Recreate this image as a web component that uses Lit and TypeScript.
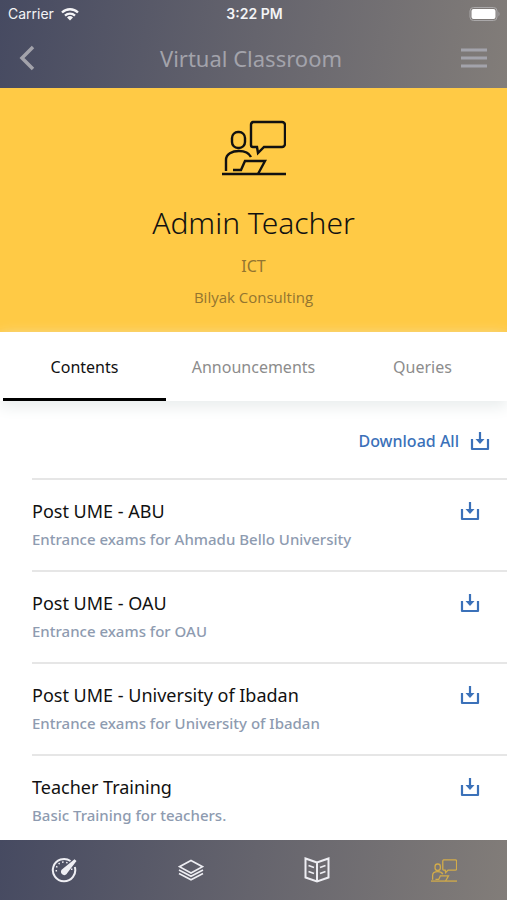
import { LitElement, html, css, svg } from "lit";
import { customElement, property, state } from "lit/decorators.js";
import { classMap } from "lit/directives/class-map.js";

const lecturer = svg`
  <path d="M31 2h29a3 3 0 0 1 3 3v19a3 3 0 0 1-3 3H42l-6 6-1-6h-4a2 2 0 0 1-2-2V5a3 3 0 0 1 2-3z"/>
  <rect x="10" y="12" width="13" height="16" rx="6"/>
  <path d="M4 51V40c0-6 6-9 13-9 5 0 10 2 12 6"/>
  <path d="M11 50h8l4-9h20l-7 13"/>
  <path d="M0 54h64"/>`;

@customElement("lecturer-icon")
class LecturerIcon extends LitElement {
  @property() size = "large";

  static styles = css`
    :host { display: block; }
    svg { display: block; fill: none; stroke: currentColor; }
    .large { width: 64px; height: 56px; stroke-width: 2.4; }
    .small { width: 26px; height: 23px; stroke-width: 3.2; }
  `;

  render() {
    return html`<svg class=${this.size} viewBox="0 0 64 56" aria-hidden="true">${lecturer}</svg>`;
  }
}

@customElement("download-icon")
class DownloadIcon extends LitElement {
  static styles = css`
    :host { display: block; }
    svg { display: block; width: 20px; height: 20px; fill: none; stroke: currentColor; stroke-width: 2.2; stroke-linejoin: round; }
    .head { fill: currentColor; stroke: none; }
  `;

  render() {
    return html`<svg viewBox="0 0 20 20" aria-hidden="true">
      <path d="M2 8v10h16V8M10 1v9" />
      <path class="head" d="M5.500 8h9l-4.500 5z" />
    </svg>`;
  }
}

interface Course {
  title: string;
  about: string;
}

@customElement("app-root")
class AppRoot extends LitElement {
  @state() private tab = "Contents";

  private tabs = ["Contents", "Announcements", "Queries"];

  private courses: Course[] = [
    { title: "Post UME - ABU", about: "Entrance exams for Ahmadu Bello University" },
    { title: "Post UME - OAU", about: "Entrance exams for OAU" },
    { title: "Post UME - University of Ibadan", about: "Entrance exams for University of Ibadan" },
    { title: "Teacher Training", about: "Basic Training for teachers." },
  ];

  static styles = css`
    :host {
      display: flex;
      flex-direction: column;
      height: 100vh;
      background: #fff;
      color: #111;
      font-family: "Noto Sans", "Open Sans", sans-serif;
      --bar: linear-gradient(100deg, #464a61 0%, #65646d 50%, #827d79 100%);
    }
    * { box-sizing: border-box; }
    button {
      border: 0;
      padding: 0;
      margin: 0;
      background: none;
      font: inherit;
      color: inherit;
      cursor: pointer;
    }
    h1, h2, h3, p, ul { margin: 0; padding: 0; font-weight: 400; }
    ul { list-style: none; }
    svg { display: block; }
    .top { flex: none; background: var(--bar); }
    .status {
      display: grid;
      grid-template-columns: 1fr auto 1fr;
      align-items: center;
      height: 28px;
      padding: 0 6px 0 8px;
      color: #f4f4f6;
      font: 14px/20px Inter, sans-serif;
    }
    .carrier { display: flex; align-items: center; gap: 7px; }
    .wifi { width: 18px; height: 13px; fill: none; stroke: currentColor; stroke-width: 2.3; }
    .time { font-weight: 600; }
    .battery { width: 32px; height: 14px; justify-self: end; }
    .title-bar {
      display: flex;
      justify-content: space-between;
      align-items: center;
      height: 60px;
      padding: 0 20px 0 19px;
      color: #a3a3ab;
    }
    .title-bar h1 { font-size: 22px; line-height: 30px; }
    .title-bar svg { fill: none; stroke: currentColor; }
    .back { width: 22px; }
    .back svg { width: 16px; height: 26px; stroke-width: 3.5; }
    .menu svg { width: 26px; height: 22px; stroke-width: 3; }
    .hero {
      flex: none;
      display: flex;
      flex-direction: column;
      align-items: center;
      height: 244px;
      padding-top: 32px;
      background: #ffca45;
      text-align: center;
    }
    .hero h2 { margin-top: 26px; font-size: 30px; line-height: 42px; font-weight: 300; }
    .subject { margin-top: 10px; font-size: 16px; line-height: 24px; color: #937530; }
    .school { margin-top: 8px; font: 15px/22px "Open Sans", sans-serif; color: #937530; }
    .tabs {
      flex: none;
      display: flex;
      height: 69px;
      background: #fff;
      box-shadow: 0 6px 14px #e9eded;
      z-index: 1;
    }
    .tab {
      flex: 1;
      margin: 0 3px;
      padding-top: 4px;
      border-bottom: 3px solid transparent;
      font-size: 16px;
      line-height: 24px;
      color: #8c8c8c;
    }
    .tab.active { border-color: #000; color: #111; }
    main { flex: 1; min-height: 0; overflow-y: auto; scrollbar-width: none; }
    .all { display: flex; justify-content: flex-end; align-items: center; height: 77px; padding: 3px 17px 0 0; }
    .all button { display: flex; align-items: center; gap: 11px; color: #3b71b9; font-size: 16px; line-height: 24px; font-weight: 500; }
    .course {
      display: flex;
      justify-content: space-between;
      align-items: flex-start;
      height: 92px;
      margin-left: 32px;
      padding: 18px 27px 0 0;
      border-top: 2px solid #e6e6e6;
    }
    .course h3 { font-size: 18px; line-height: 26px; }
    .course p { margin-top: 4px; font-size: 15px; line-height: 22px; font-weight: 500; color: #8e9bb0; }
    .get { color: #3b71b9; padding-top: 3px; }
    .nav {
      flex: none;
      display: grid;
      grid-template-columns: repeat(4, 1fr);
      align-items: center;
      height: 60px;
      background: var(--bar);
    }
    .nav a { display: grid; place-items: center; height: 60px; padding-left: 1px; color: #eeeef3; }
    .nav a.here { color: #d3ac49; }
    .nav svg { width: 26px; height: 26px; fill: none; stroke: currentColor; stroke-width: 1.6; }
  `;

  render() {
    return html`
      <header class="top">
        <div class="status">
          <span class="carrier">
            Carrier
            <svg class="wifi" viewBox="0 0 18 13" aria-label="Wi-Fi">
              <path d="M1 4.500a11.500 11.500 0 0 1 16 0M4 7.700a7.300 7.300 0 0 1 10 0" />
              <path fill="currentColor" stroke="none" d="M9 12.500l-3-3a4.300 4.300 0 0 1 6 0z" />
            </svg>
          </span>
          <span class="time">3:22 PM</span>
          <svg class="battery" viewBox="0 0 32 14" aria-label="Battery full">
            <rect x="1" y="0.500" width="27" height="13" rx="3.500" fill="none" stroke="#aaa8a9" />
            <rect x="2.500" y="2" width="24" height="10" rx="2" fill="#fff" />
            <path d="M29.500 4.500q2 2.500 0 5z" fill="#aaa8a9" />
          </svg>
        </div>
        <div class="title-bar">
          <button class="back" aria-label="Back">
            <svg viewBox="0 0 16 26"><path d="M14 2L3 13l11 11" /></svg>
          </button>
          <h1>Virtual Classroom</h1>
          <button class="menu" aria-label="Menu">
            <svg viewBox="0 0 26 22"><path d="M0 3h26M0 11h26M0 19h26" /></svg>
          </button>
        </div>
      </header>
      <section class="hero">
        <lecturer-icon></lecturer-icon>
        <h2>Admin Teacher</h2>
        <p class="subject">ICT</p>
        <p class="school">Bilyak Consulting</p>
      </section>
      <div class="tabs" role="tablist">
        ${this.tabs.map(
          (name) => html`<button
            role="tab"
            class=${classMap({ tab: true, active: name === this.tab })}
            aria-selected=${name === this.tab}
            @click=${() => (this.tab = name)}
          >${name}</button>`
        )}
      </div>
      <main>
        <div class="all"><button>Download All <download-icon></download-icon></button></div>
        <ul>
          ${this.courses.map(
            (c) => html`<li class="course">
              <div><h3>${c.title}</h3><p>${c.about}</p></div>
              <button class="get" aria-label="Download ${c.title}"><download-icon></download-icon></button>
            </li>`
          )}
        </ul>
      </main>
      <nav class="nav">
        <a href="#dashboard" aria-label="Dashboard">
          <svg viewBox="0 0 26 26">
            <path stroke-width="2" d="M19.500 4A11.200 11.200 0 1 0 23.800 10" />
            <path stroke-width="1.500" stroke-dasharray="1.500 2.500" d="M5.500 14.500a7.500 7.500 0 0 1 11-8.500M20.500 11.500a7 7 0 0 1 0 4" />
            <path fill="currentColor" stroke="none" d="M25.500 4L16.300 16a3.300 3.300 0 1 1-4.800-4L23.500 2.300z" />
          </svg>
        </a>
        <a href="#layers" aria-label="Layers">
          <svg viewBox="0 0 26 26">
            <path d="M13 3.500l11.500 6.200L13 16 1.500 9.700z" />
            <path d="M1 13l12 6.300L25 13M1 16.500l12 6.300 12-6.300" />
          </svg>
        </a>
        <a href="#library" aria-label="Library">
          <svg viewBox="0 0 26 26">
            <path stroke-width="2" d="M13 5.500L1.500 1.500v19L13 24.500l11.500-4v-19zM13 5.500v19" />
            <path stroke-width="1.700" d="M4.500 8.500l5.500 2M4.500 14.500l5.500 2M21.500 8.500l-5.500 2M21.500 14.500l-5.500 2" />
          </svg>
        </a>
        <a class="here" href="#classroom" aria-label="Virtual Classroom" aria-current="page">
          <lecturer-icon size="small"></lecturer-icon>
        </a>
      </nav>
    `;
  }
}
